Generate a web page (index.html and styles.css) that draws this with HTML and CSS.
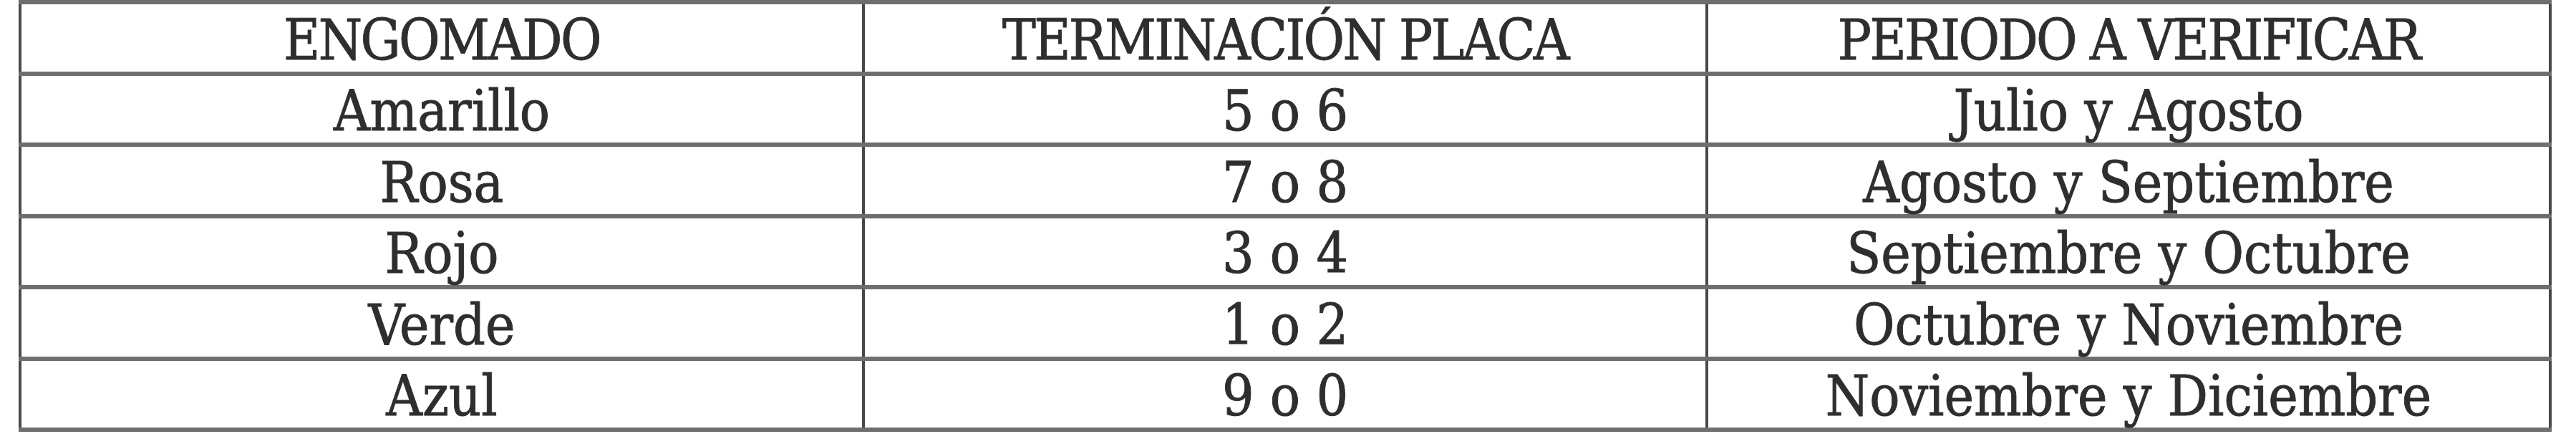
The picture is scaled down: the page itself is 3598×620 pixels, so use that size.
FILE: index.html
```html
<!DOCTYPE html>
<html lang="es">
<head>
<meta charset="utf-8">
<title>Calendario de verificación</title>
<link rel="stylesheet" href="styles.css">
</head>
<body>
<table class="verif">
  <colgroup><col class="c"><col class="c"><col class="c"></colgroup>
  <thead>
    <tr><th>ENGOMADO</th><th>TERMINACIÓN PLACA</th><th>PERIODO A VERIFICAR</th></tr>
  </thead>
  <tbody>
    <tr><td>Amarillo</td><td>5 o 6</td><td>Julio y Agosto</td></tr>
    <tr><td>Rosa</td><td>7 o 8</td><td>Agosto y Septiembre</td></tr>
    <tr><td>Rojo</td><td>3 o 4</td><td>Septiembre y Octubre</td></tr>
    <tr><td>Verde</td><td>1 o 2</td><td>Octubre y Noviembre</td></tr>
    <tr><td>Azul</td><td>9 o 0</td><td>Noviembre y Diciembre</td></tr>
  </tbody>
</table>
</body>
</html>
```
FILE: styles.css
```css
html, body {
  margin: 0;
  padding: 0;
  background: #ffffff;
}
.verif {
  margin: 0 0 0 26px;
  width: 3538px;
  table-layout: fixed;
  border-collapse: collapse;
  font-family: "DejaVu Serif Condensed", "DejaVu Serif", serif;
  font-size: 78px;
  color: #2e2e2e;
}
.verif th,
.verif td {
  height: 99.5px;
  padding: 6px 0 0 0;
  box-sizing: border-box;
  text-align: center;
  vertical-align: middle;
  font-weight: normal;
  line-height: 1;
  -webkit-text-stroke: 0.9px #2e2e2e;
  border-top: 6px solid #6e6e6e;
  border-bottom: 6px solid #6e6e6e;
  border-left: 4px solid #484848;
  border-right: 4px solid #484848;
}
.verif th {
  letter-spacing: -2.6px;
}
```
